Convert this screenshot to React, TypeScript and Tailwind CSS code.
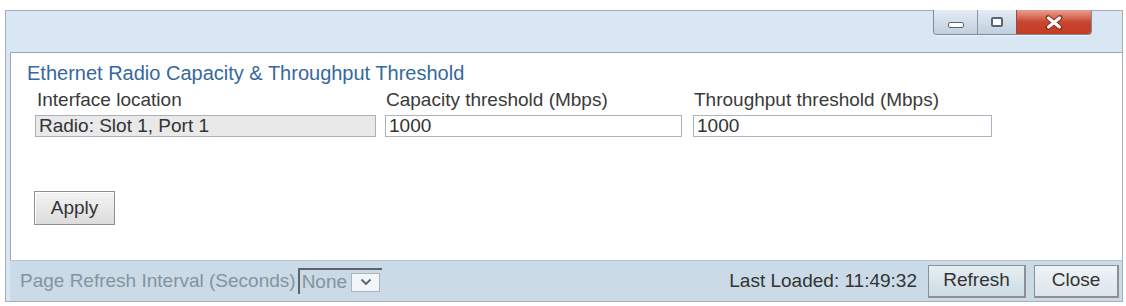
import React from "react";

const font = { fontFamily: '"Liberation Sans", Arial, sans-serif' };

export default function App() {
  return (
    <div className="w-[1126px] h-[306px] bg-white pt-[10px] pl-[5px]" style={font}>
      <div className="w-[1118px] h-[292px] border border-[#a3afbb] bg-[#d9e6f3] flex flex-col">
        <div className="h-[41px] flex justify-end items-start pr-[30px]">
          <div className="flex h-[25px] -mt-px rounded-b-[4px] overflow-hidden border border-[#7e8a98] border-t-0 shadow-[0_1px_0_#ffffff80]">
            <div className="w-[44px] bg-gradient-to-b from-[#e4ecf4] to-[#c1cfdd] border-r border-[#8a97a6] flex items-center justify-center">
              <div className="w-[16px] h-[6px] border border-[#5a6675] bg-white rounded-[2px] mt-[5px]" />
            </div>
            <div className="w-[39px] bg-gradient-to-b from-[#e4ecf4] to-[#c1cfdd] border-r border-[#8a5050] flex items-center justify-center">
              <div className="w-[12px] h-[10px] border-[2px] border-[#5a6675] bg-white rounded-[2px]" />
            </div>
            <div className="w-[74px] bg-gradient-to-b from-[#e9a090] via-[#c8452f] to-[#c43c26] flex items-center justify-center">
              <svg width="18" height="15" viewBox="0 0 18 15">
                <path d="M3 2.5 L15 12.5 M15 2.5 L3 12.5" stroke="#7a2418" strokeWidth="5" strokeLinecap="round" fill="none" opacity="0.7" />
                <path d="M3.5 3 L14.5 12 M14.5 3 L3.5 12" stroke="#ffffff" strokeWidth="3" strokeLinecap="round" fill="none" />
              </svg>
            </div>
          </div>
        </div>
        <div className="flex-1 ml-[4px] bg-white border-t border-l border-[#9aa6b2] flex flex-col pl-[16px] pt-[10px]">
          <div className="text-[20px] text-[#36689e] leading-[20px]">Ethernet Radio Capacity &amp; Throughput Threshold</div>
          <div className="flex mt-[6px] pl-[8px]">
            <div className="w-[350px] flex flex-col">
              <div className="text-[19px] text-[#3a3a3a] leading-[22px] pl-[2px]">Interface location</div>
              <div className="mt-[4px] w-[341px] h-[22px] bg-[#e9e9e9] border border-[#a9b0b6] text-[19px] text-[#333] leading-[20px] pl-[3px]">Radio: Slot 1, Port 1</div>
            </div>
            <div className="w-[308px] flex flex-col">
              <div className="text-[19px] text-[#3a3a3a] leading-[22px] pl-[1px]">Capacity threshold (Mbps)</div>
              <div className="mt-[4px] w-[297px] h-[22px] bg-white border border-[#a9b5be] text-[19px] text-[#333] leading-[20px] pl-[3px]">1000</div>
            </div>
            <div className="flex flex-col">
              <div className="text-[19px] text-[#3a3a3a] leading-[22px] pl-[1px]">Throughput threshold (Mbps)</div>
              <div className="mt-[4px] w-[299px] h-[22px] bg-white border border-[#a9b5be] text-[19px] text-[#333] leading-[20px] pl-[3px]">1000</div>
            </div>
          </div>
          <div className="mt-[54px] pl-[7px]">
            <div className="w-[81px] h-[34px] border border-[#8d9196] bg-gradient-to-b from-[#f4f4f4] to-[#dcdcdc] flex items-center justify-center text-[19px] text-[#333] shadow-[inset_1px_1px_0_#ffffff]">Apply</div>
          </div>
        </div>
        <div className="h-[41px] ml-[4px] bg-[#cadbe7] border-t border-[#b3c4d1] flex items-center">
          <span className="text-[19px] text-[#84949f] ml-[10px]">Page Refresh Interval (Seconds)</span>
          <div className="ml-[2px] flex items-center h-[26px] border-t-2 border-l-2 border-[#59646e] bg-[#c9dae6] pr-[2px]">
            <span className="text-[19px] text-[#84949f] pl-[2px]">None</span>
            <div className="ml-[4px] w-[29px] h-[19px] bg-[#f3f6f8] border border-[#a9b5be] flex items-center justify-center">
              <svg width="12" height="8" viewBox="0 0 12 8"><path d="M1.5 1.5 L6 6 L10.5 1.5" fill="none" stroke="#556270" strokeWidth="1.8" /></svg>
            </div>
          </div>
          <div className="flex-1" />
          <span className="text-[19px] text-[#333] mr-[11px]">Last Loaded: 11:49:32</span>
          <div className="w-[98px] h-[33px] border border-[#8d9196] border-r-2 border-b-2 bg-gradient-to-b from-[#e6eef3] to-[#cddbe4] flex items-center justify-center text-[19px] text-[#333]">Refresh</div>
          <div className="ml-[8px] mr-[3px] w-[85px] h-[33px] border border-[#8d9196] border-r-2 border-b-2 bg-gradient-to-b from-[#eef3f6] to-[#dce6ed] flex items-center justify-center text-[19px] text-[#333]">Close</div>
        </div>
      </div>
    </div>
  );
}
